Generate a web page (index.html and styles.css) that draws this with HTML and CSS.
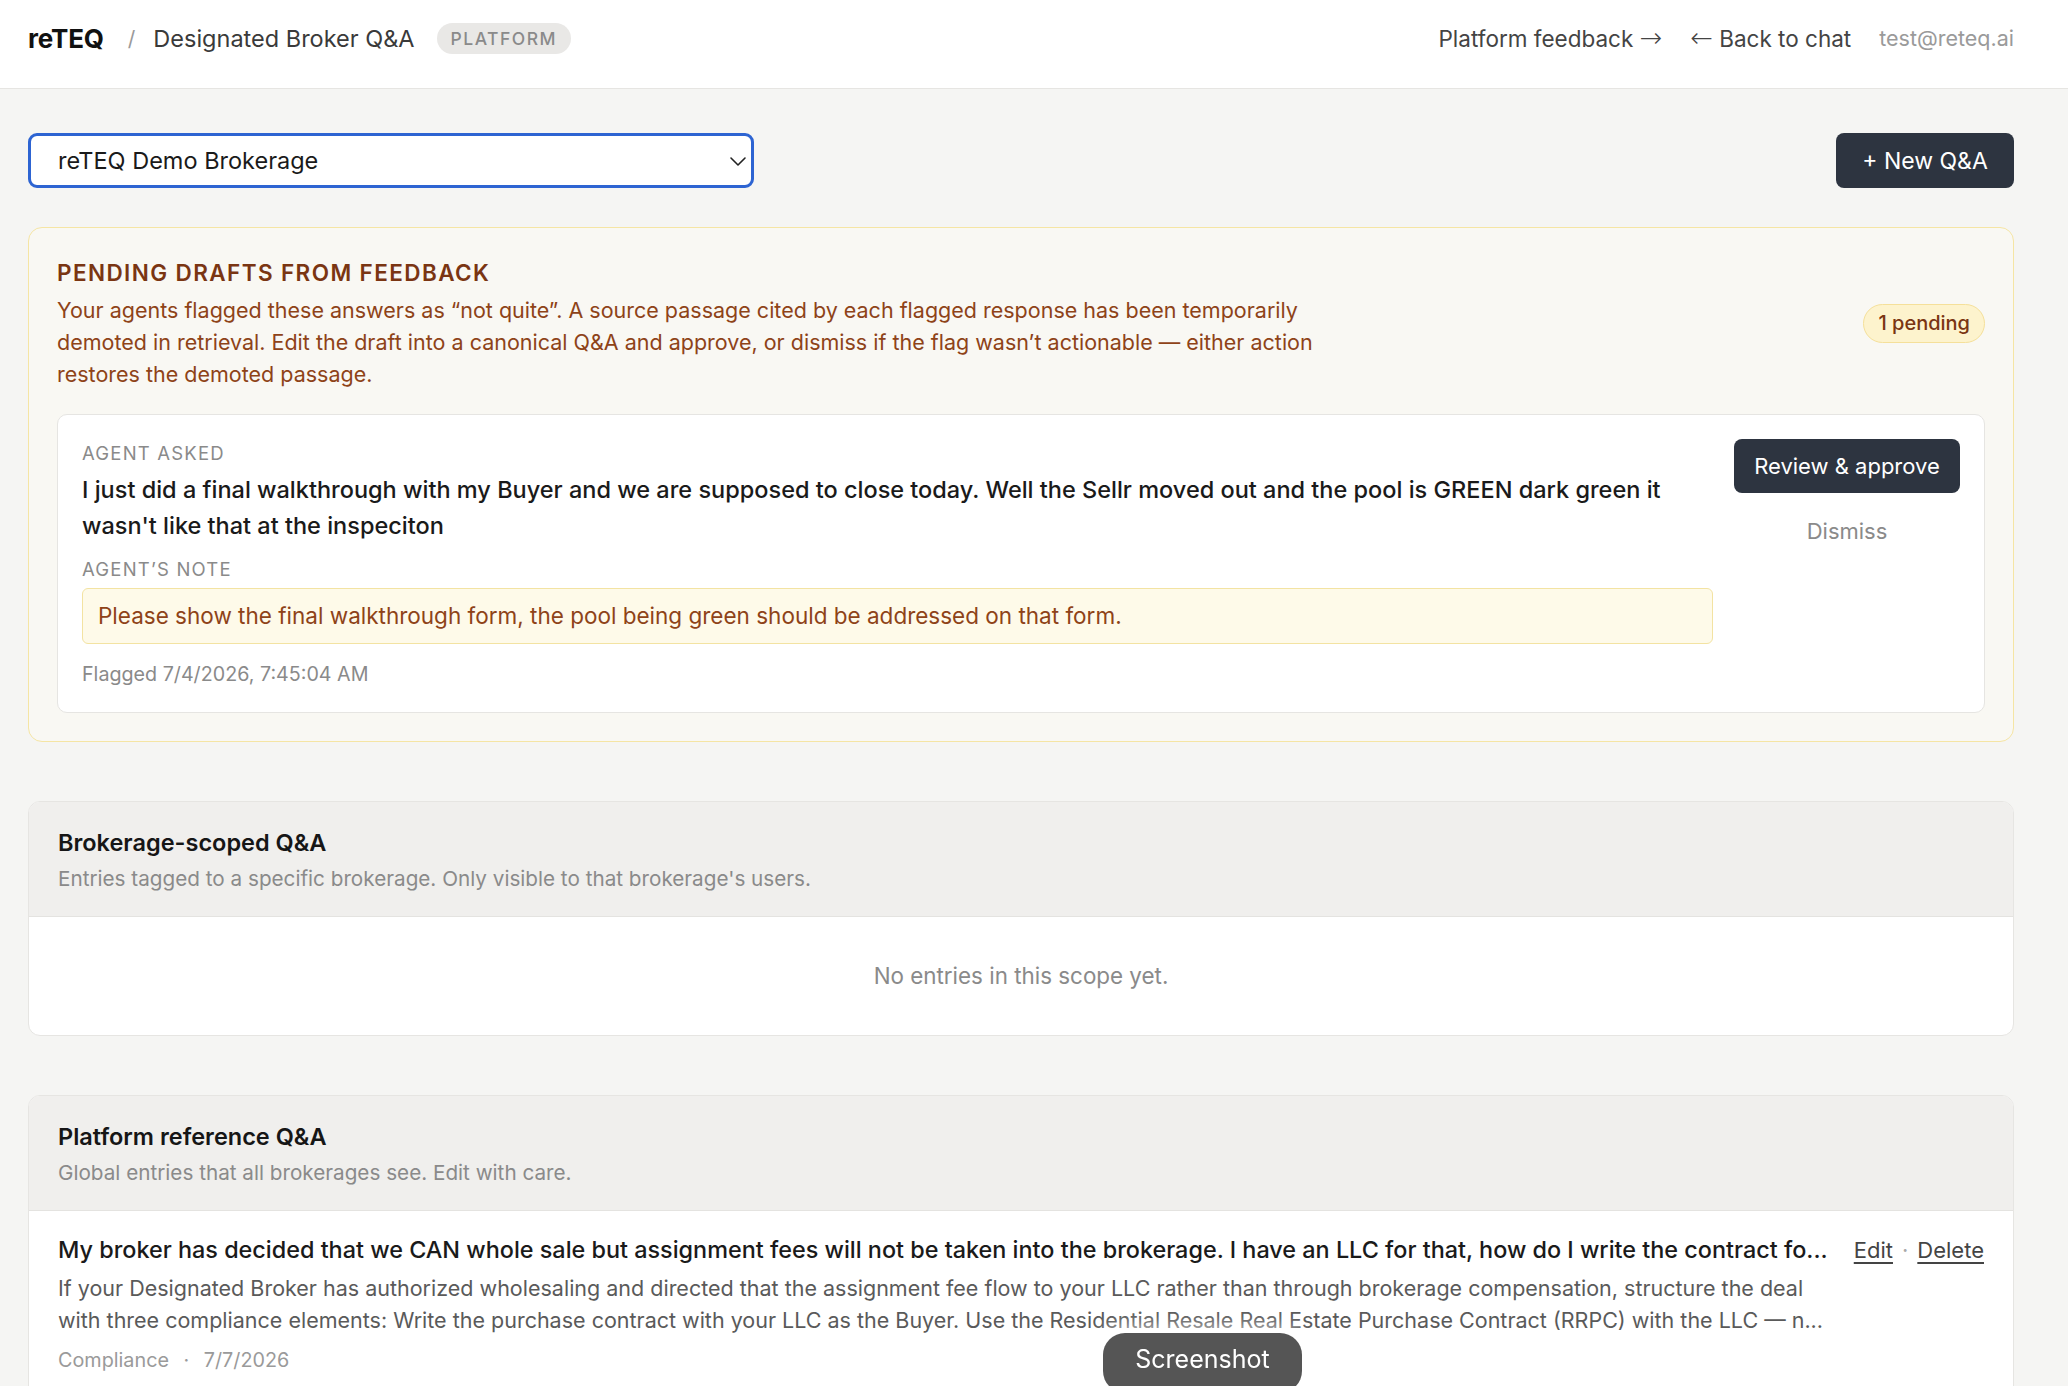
FILE: index.html
```html
<!DOCTYPE html>
<html lang="en">
<head>
    <meta charset="UTF-8">
    <meta name="viewport" content="width=device-width, initial-scale=1.0">
    <title>reTEQ - Designated Broker Q&amp;A</title>
    <link rel="stylesheet" href="styles.css">
</head>
<body>
    <header class="topbar">
        <div class="topbar-left">
            <span class="brand">reTEQ</span>
            <span class="crumb-sep">/</span>
            <span class="page-title">Designated Broker Q&amp;A</span>
            <span class="scope-pill">PLATFORM</span>
        </div>
        <nav class="topbar-right">
            <a class="nav-link" href="#">Platform feedback <span class="arrow">→</span></a>
            <a class="nav-link" href="#"><span class="arrow">←</span> Back to chat</a>
            <span class="user-email">test@reteq.ai</span>
        </nav>
    </header>

    <main class="page">
        <div class="toolbar">
            <div class="select-box">
                <span>reTEQ Demo Brokerage</span>
                <svg class="select-chevron" width="22" height="22" viewBox="0 0 22 22" fill="none">
                    <path d="M4 8l7 7 7-7" stroke="#222" stroke-width="1.6" stroke-linecap="round" stroke-linejoin="round"/>
                </svg>
            </div>
            <button class="btn-dark btn-new">+ New Q&amp;A</button>
        </div>

        <!-- drafts queued from agent feedback -->
        <section class="pending-card">
            <div class="pending-head">
                <div class="pending-text">
                    <h2 class="pending-title">PENDING DRAFTS FROM FEEDBACK</h2>
                    <p class="pending-desc">
                        Your agents flagged these answers as “not quite”. A source passage cited by each flagged response has been temporarily demoted in retrieval. Edit the draft into a canonical Q&amp;A and approve, or dismiss if the flag wasn’t actionable — either action restores the demoted passage.
                    </p>
                </div>
                <span class="pending-count">1 pending</span>
            </div>

            <div class="draft-item">
                <div class="draft-body">
                    <div class="field-label">AGENT ASKED</div>
                    <p class="draft-question">I just did a final walkthrough with my Buyer and we are supposed to close today. Well the Sellr moved out and the pool is GREEN dark green it wasn't like that at the inspeciton</p>
                    <div class="field-label label-note">AGENT’S NOTE</div>
                    <div class="draft-note">Please show the final walkthrough form, the pool being green should be addressed on that form.</div>
                    <div class="draft-meta">Flagged 7/4/2026, 7:45:04 AM</div>
                </div>
                <div class="draft-actions">
                    <button class="btn-dark btn-review">Review &amp; approve</button>
                    <button class="btn-dismiss">Dismiss</button>
                </div>
            </div>
        </section>

        <section class="qa-section">
            <div class="qa-section-head">
                <h3 class="qa-section-title">Brokerage-scoped Q&amp;A</h3>
                <p class="qa-section-sub">Entries tagged to a specific brokerage. Only visible to that brokerage's users.</p>
            </div>
            <div class="qa-empty">No entries in this scope yet.</div>
        </section>

        <section class="qa-section">
            <div class="qa-section-head">
                <h3 class="qa-section-title">Platform reference Q&amp;A</h3>
                <p class="qa-section-sub">Global entries that all brokerages see. Edit with care.</p>
            </div>
            <div class="qa-entry">
                <div class="qa-entry-main">
                    <div class="qa-entry-question">My broker has decided that we CAN whole sale but assignment fees will not be taken into the brokerage. I have an LLC for that, how do I write the contract fo...</div>
                    <p class="qa-entry-answer">If your Designated Broker has authorized wholesaling and directed that the assignment fee flow to your LLC rather than through brokerage compensation, structure the deal with three compliance elements: Write the purchase contract with your LLC as the Buyer. Use the Residential Resale Real Estate Purchase Contract (RRPC) with the LLC — n...</p>
                    <div class="qa-entry-meta">Compliance <span class="dot">·</span> 7/7/2026</div>
                </div>
                <div class="qa-entry-actions">
                    <a href="#">Edit</a>
                    <span class="dot">·</span>
                    <a href="#">Delete</a>
                </div>
            </div>
        </section>
    </main>

    <div class="capture-hint">Screenshot</div>
</body>
</html>
```

FILE: styles.css
```css
* {
    margin: 0;
    padding: 0;
    box-sizing: border-box;
}

body {
    font-family: Inter, 'Noto Sans', sans-serif;
    background: #f5f5f3;
    color: #1c1c1c;
    min-height: 100vh;
}

a {
    color: inherit;
    text-decoration: none;
}

button {
    font-family: inherit;
    border: none;
    cursor: pointer;
}

/* top bar */
.topbar {
    height: 89px;
    background: #ffffff;
    border-bottom: 1px solid #e6e5e2;
    display: flex;
    align-items: center;
    justify-content: space-between;
    padding: 0 54px 12px 28px;
}

.topbar-left {
    display: flex;
    align-items: center;
}

.brand {
    font-size: 26px;
    font-weight: 700;
    color: #111;
    letter-spacing: -0.2px;
}

.crumb-sep {
    color: #9a9a9a;
    font-size: 21px;
    margin: 0 18px 0 24px;
}

.page-title {
    font-size: 23.5px;
    color: #3a3a3a;
}

.scope-pill {
    margin-left: 22px;
    height: 31px;
    padding: 0 14px;
    border-radius: 16px;
    background: #e9e8e6;
    color: #8a8a8a;
    font-size: 17.5px;
    font-weight: 500;
    letter-spacing: 1.5px;
    display: flex;
    align-items: center;
}

.topbar-right {
    display: flex;
    align-items: center;
    gap: 28px;
    font-size: 22.5px;
}

.nav-link {
    color: #444;
}

.arrow {
    font-family: 'DejaVu Sans', sans-serif;
    font-size: 1.2em;
    line-height: 1;
    font-weight: 300;
}

.user-email {
    color: #9a9a9a;
    font-size: 21.5px;
}

/* page body */
.page {
    padding: 44px 54px 60px 28px;
}

.toolbar {
    display: flex;
    align-items: center;
    justify-content: space-between;
}

.select-box {
    width: 726px;
    height: 55px;
    border: 3px solid #2d64d2;
    border-radius: 9px;
    background: #fff;
    display: flex;
    align-items: center;
    justify-content: space-between;
    padding: 0 2px 0 27px;
    font-size: 23.5px;
    color: #1a1a1a;
}

.btn-dark {
    background: #2d3440;
    color: #fff;
    border-radius: 8px;
    font-size: 23px;
}

.btn-new {
    width: 178px;
    height: 55px;
}

/* pending drafts */
.pending-card {
    margin-top: 39px;
    background: #f9f8f3;
    border: 1.5px solid #f5e5a4;
    border-radius: 14px;
    padding: 28px;
}

.pending-head {
    display: flex;
    align-items: center;
    justify-content: space-between;
}

.pending-title {
    font-size: 22.5px;
    font-weight: 600;
    letter-spacing: 1.4px;
    color: #7a3512;
    line-height: 34px;
}

.pending-desc {
    margin-top: 4px;
    max-width: 1300px;
    font-size: 21.5px;
    line-height: 32px;
    color: #8e4318;
}

.pending-count {
    height: 39px;
    padding: 0 14px;
    border-radius: 20px;
    background: #fdf3cd;
    border: 1px solid #f5e09a;
    color: #7a3512;
    font-size: 20px;
    font-weight: 500;
    display: flex;
    align-items: center;
}

.draft-item {
    margin-top: 24px;
    background: #fff;
    border: 1px solid #e6e5e2;
    border-radius: 10px;
    padding: 24px;
    display: flex;
    gap: 21px;
}

.draft-body {
    flex: 1;
}

.field-label {
    font-size: 18.5px;
    line-height: 28px;
    letter-spacing: 1.2px;
    color: #8a8a8a;
}

.label-note {
    margin-top: 11px;
}

.draft-question {
    margin-top: 5px;
    font-size: 23.5px;
    line-height: 36px;
    font-weight: 500;
    color: #1a1a1a;
}

.draft-note {
    margin-top: 5px;
    background: #fefae9;
    border: 1px solid #f3e3a2;
    border-radius: 6px;
    padding: 12px 15px;
    font-size: 22.5px;
    line-height: 30px;
    color: #8e4318;
}

.draft-meta {
    margin-top: 16px;
    font-size: 19.7px;
    line-height: 28px;
    color: #8a8a8a;
}

.draft-actions {
    width: 226px;
    display: flex;
    flex-direction: column;
    align-items: center;
}

.btn-review {
    width: 226px;
    height: 54px;
}

.btn-review,
.btn-dismiss {
    font-size: 22px;
}

.btn-dismiss {
    margin-top: 23px;
    background: none;
    color: #8a8a8a;
    line-height: 30px;
}

/* Q&A scope sections */
.qa-section {
    margin-top: 59px;
    background: #fff;
    border: 1px solid #e6e5e2;
    border-radius: 12px;
    overflow: hidden;
}

.qa-section-head {
    background: #f0efed;
    border-bottom: 1px solid #e4e3e0;
    padding: 26px 29px 22px;
}

.qa-section-title {
    font-size: 23.5px;
    font-weight: 600;
    line-height: 30px;
    color: #161616;
}

.qa-section-sub {
    margin-top: 6px;
    font-size: 20.7px;
    line-height: 30px;
    color: #8a8a8a;
}

.qa-empty {
    padding: 44px;
    text-align: center;
    font-size: 22.4px;
    line-height: 30px;
    color: #8a8a8a;
}

.qa-entry {
    display: flex;
    gap: 26px;
    padding: 23px 29px 24px;
}

.qa-entry-main {
    flex: 1;
    min-width: 0;
}

.qa-entry-question {
    font-size: 23.4px;
    line-height: 32px;
    font-weight: 500;
    color: #1a1a1a;
    white-space: nowrap;
    overflow: hidden;
}

.qa-entry-answer {
    margin-top: 6px;
    font-size: 21.5px;
    line-height: 32px;
    color: #5a5a5a;
}

.qa-entry-meta {
    margin-top: 10px;
    font-size: 19.8px;
    line-height: 28px;
    color: #9a9a9a;
}

.qa-entry-meta .dot {
    margin: 0 9px;
}

.qa-entry-actions {
    display: flex;
    align-items: flex-start;
    gap: 9px;
    font-size: 22px;
    line-height: 32px;
    color: #444;
}

.qa-entry-actions a {
    text-decoration: underline;
    text-underline-offset: 4px;
}

.qa-entry-actions .dot {
    color: #aaa;
}

/* floating capture hint */
.capture-hint {
    position: fixed;
    left: 1103px;
    top: 1333px;
    width: 199px;
    height: 60px;
    border-radius: 22px;
    background: rgba(70, 70, 70, 0.92);
    box-shadow: 0 0 18px 6px rgba(255, 255, 255, 0.7);
    color: #fff;
    font-size: 25px;
    display: flex;
    justify-content: center;
    padding-top: 11px;
}
```
